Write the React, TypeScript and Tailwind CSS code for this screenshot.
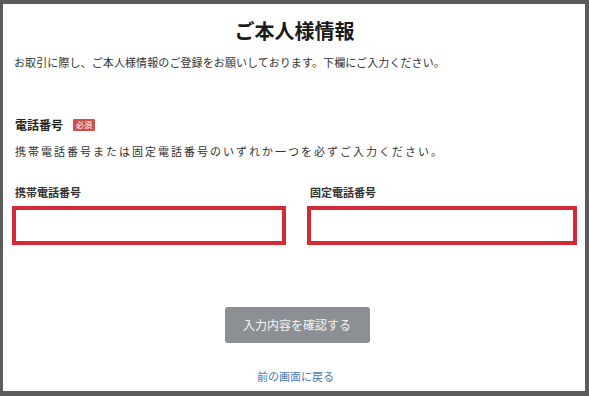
import React from "react";

const font = {
  fontFamily: '"Noto Sans CJK JP", "Noto Sans", sans-serif',
};

/**
 * Phone number input box with the red highlight frame
 */
const PhoneField: React.FC<{ label: string }> = ({ label }) => (
  <div className="flex flex-col">
    <label className="pl-[3px] text-[11px] leading-[16px] font-bold text-[#333]">
      {label}
    </label>
    <div className="mt-[6px] h-[39px] border-[4px] border-[#d42a35] bg-white" />
  </div>
);

export default function App() {
  return (
    <div
      className="w-[589px] h-[396px] bg-[#5b5b5b] pt-[4px] pl-[3px] pr-[4px] pb-[5px]"
      style={font}
    >
      <div className="h-full bg-white flex flex-col pl-[9px] pr-[8px] pt-[13px] text-[#222]">
        {/* Title */}
        <h1 className="text-center text-[20px] leading-[28px] font-bold text-[#1a1a1a]">
          ご本人様情報
        </h1>
        <p className="mt-[9px] pl-[2px] text-[11px] leading-[16px] tracking-[0.1px] text-[#333]">
          お取引に際し、ご本人様情報のご登録をお願いしております。下欄にご入力ください。
        </p>

        {/* Phone section */}
        <div className="mt-[47px] pl-[3px] flex items-center gap-[10px]">
          <span className="text-[12px] leading-[16px] font-bold text-[#222]">
            電話番号
          </span>
          <span className="h-[12px] px-[3px] flex items-center bg-[#d0504c] text-white text-[8px] leading-none rounded-[1px]">
            必須
          </span>
        </div>
        <p className="mt-[10px] pl-[3px] text-[11px] leading-[16px] tracking-[2px] text-[#333]">
          携帯電話番号または固定電話番号のいずれか一つを必ずご入力ください。
        </p>

        <div className="mt-[25px] grid grid-cols-[274px_270px] gap-[21px]">
          <PhoneField label="携帯電話番号" />
          <PhoneField label="固定電話番号" />
        </div>

        {/* Actions */}
        <div className="mt-[62px] flex justify-center">
          <button className="ml-[5px] w-[145px] h-[36px] rounded-[3px] bg-[#8c9095] text-[#f4f4f4] text-[12px]">
            入力内容を確認する
          </button>
        </div>
        <div className="mt-[25px] flex justify-center">
          <a className="ml-[2px] text-[11px] leading-[16px] text-[#4a79b0]">前の画面に戻る</a>
        </div>
      </div>
    </div>
  );
}
